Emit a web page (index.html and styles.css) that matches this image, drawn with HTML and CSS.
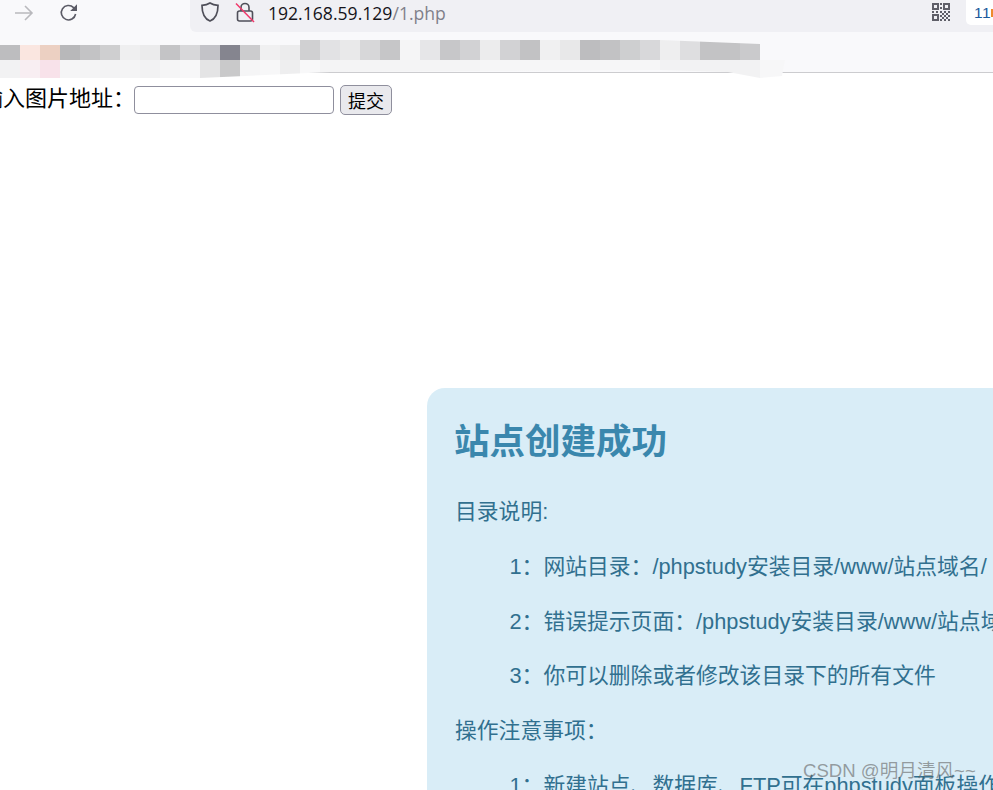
FILE: index.html
```html
<!DOCTYPE html>
<html lang="zh-CN">
<head>
    <meta charset="UTF-8">
    <title>192.168.59.129/1.php</title>
    <link rel="stylesheet" href="styles.css">
</head>
<body>
    <div class="toolbar">
        <div class="navButtons">
            <svg class="forward" width="20" height="18" viewBox="0 0 20 18"><path d="M1 9H18M11 2l7 7-7 7"/></svg>
            <svg class="reload" width="20" height="20" viewBox="0 0 20 20"><path d="M16.6 11a7.2 7.2 0 1 1-2-6.4L17 7"/><path class="fill" d="M18 1.2V8h-6.8z"/></svg>
        </div>
        <div class="urlBar">
            <svg class="shield" width="20" height="22" viewBox="0 0 20 22"><path d="M10 2c2.300 1.500 5 2.200 8 2.400C18 12 16 17.500 10 20 4 17.500 2 12 2 4.400 5 4.200 7.700 3.500 10 2z"/></svg>
            <svg class="lock" width="20" height="22" viewBox="0 0 20 22"><rect x="2.500" y="10" width="15" height="10" rx="2"/><path d="M6 10V6.500a4 4 0 0 1 8 0V10"/><path class="slash" d="M1 2.500L19 21"/></svg>
            <div class="address">192.168.59.129<span class="addressPath">/1.php</span></div>
            <svg class="qrIcon" width="18" height="18" viewBox="0 0 18 18">
                <path d="M0 0h7v7H0zM2 2v3h3V2zM11 0h7v7h-7zM13 2v3h3V2zM0 11h7v7H0zM2 13v3h3v-3z" fill-rule="evenodd"/>
                <path d="M8 0h2v2H8zM8 4h2v2H8zM0 8h2v2H0zM4 8h2v2H4zM8 8h2v2H8zM12 8h2v2h-2zM16 8h2v2h-2zM10 10h2v2h-2zM14 10h2v2h-2zM8 12h2v2H8zM12 12h2v2h-2zM16 12h2v2h-2zM10 14h2v2h-2zM14 14h2v2h-2zM8 16h2v2H8zM12 16h2v2h-2zM16 16h2v2h-2z"/>
            </svg>
            <div class="extTab"><span class="extNum">11</span><span class="extMark"></span></div>
        </div>
    </div>
    <div class="bookmarks">
        <div class="mosaicTop"></div>
        <div class="mosaicBottom"></div>
    </div>

    <form class="imgForm">
        <label class="imgLabel">输入图片地址：</label>
        <input class="imgInput" type="text">
        <button class="imgSubmit" type="button">提交</button>
    </form>

    <div class="sitePanel">
        <h1>站点创建成功</h1>
        <p>目录说明:</p>
        <p class="item">1：网站目录：/phpstudy安装目录/www/站点域名/</p>
        <p class="item">2：错误提示页面：/phpstudy安装目录/www/站点域名/error/</p>
        <p class="item">3：你可以删除或者修改该目录下的所有文件</p>
        <p>操作注意事项：</p>
        <p class="item">1：新建站点、数据库、FTP可在phpstudy面板操作</p>
    </div>

    <div class="watermark">CSDN @明月清风~~</div>
</body>
</html>
```
FILE: styles.css
```css
html, body {
    margin: 0;
    padding: 0;
    height: 790px;
    overflow: hidden;
    background: #fff;
}
body {
    position: relative;
    font-family: "Liberation Sans", "Noto Sans CJK SC", sans-serif;
}

/* browser chrome */
.toolbar {
    display: flex;
    height: 32px;
    background: #f9f9fb;
}
.navButtons {
    display: flex;
    align-items: flex-start;
    width: 191px;
    padding: 4px 0 0 14px;
    box-sizing: border-box;
}
.navButtons svg {
    fill: none;
    stroke-width: 1.6;
}
.forward {
    stroke: #b9b9bd;
}
.reload {
    margin-left: 25px;
    margin-top: -1px;
    stroke: #5b5b66;
}
.reload .fill {
    fill: #5b5b66;
    stroke: none;
}
.urlBar {
    flex: 1;
    display: flex;
    align-items: flex-start;
    background: #f0f0f4;
    border-bottom-left-radius: 6px;
}
.shield {
    margin: 1px 0 0 10px;
    fill: none;
    stroke: #4f4f59;
    stroke-width: 1.7;
}
.lock {
    margin: 1px 0 0 15px;
    fill: none;
    stroke: #4f4f59;
    stroke-width: 1.6;
}
.lock .slash {
    stroke: #f0386b;
    stroke-width: 1.5;
}
.address {
    margin-left: 13px;
    font-family: "Open Sans", "Noto Sans", sans-serif;
    font-size: 17.600px;
    line-height: 26px;
    color: #15141a;
    width: 664px;
    white-space: nowrap;
}
.addressPath {
    color: #80808a;
}
.qrIcon {
    margin-top: 3px;
    fill: #5f5f68;
}
.extTab {
    display: flex;
    align-items: center;
    margin-left: 16px;
    padding-left: 8px;
    flex: 1;
    height: 25px;
    background: #fff;
    border-bottom-left-radius: 5px;
    overflow: hidden;
}
.extNum {
    font-size: 15.500px;
    color: #1b5a9c;
    letter-spacing: 0.500px;
}
.extMark {
    width: 2px;
    height: 8px;
    background: #ee8a2c;
}

.bookmarks {
    position: relative;
    height: 40px;
    background: #f9f9fb;
    border-bottom: 1px solid #cccccf;
}
.mosaicTop {
    position: absolute;
    left: 0;
    top: 8px;
    width: 760px;
    height: 20px;
    clip-path: polygon(0 5px, 300px 5px, 300px 0, 660px 0, 760px 4px, 760px 20px, 0 20px);
    background: linear-gradient(90deg,
        #bdbdbf 0 20px, #fae6e0 0 40px, #ecd0c2 0 60px, #b8b8ba 0 80px, #c3c3c5 0 100px,
        #cfcfd0 0 120px, #efeff0 0 140px, #ebebec 0 160px, #c4c4c6 0 180px, #d8d8da 0 200px,
        #c3c3c8 0 220px, #85858f 0 240px, #ccccce 0 260px, #f0f0f1 0 280px, #ececed 0 300px,
        #d0d0d2 0 320px, #e2e2e4 0 340px, #e9e9ea 0 360px, #d7d7d9 0 380px, #c6c6c8 0 400px,
        #f5f5f6 0 420px, #e6e6e8 0 440px, #c7c7c9 0 460px, #d2d2d4 0 480px, #ececed 0 500px,
        #d2d2d4 0 520px, #c2c2c4 0 540px, #f0f0f1 0 560px, #e8e8e9 0 580px, #bdbdbf 0 600px,
        #c2c2c4 0 620px, #cecfd0 0 640px, #d8d8da 0 660px, #eeeeef 0 680px, #dedee0 0 700px,
        #c3c3c5 0 720px, #c3c3c5 0 740px, #cacacc 0 760px);
}
.mosaicBottom {
    position: absolute;
    left: 0;
    top: 28px;
    width: 785px;
    height: 18px;
    clip-path: polygon(0 0, 785px 0, 782px 16px, 760px 18px, 728px 12px, 660px 10px, 330px 12px, 200px 18px, 0 18px);
    background: linear-gradient(90deg,
        #f2f2f3 0 20px, #f8eef2 0 40px, #f8e2ea 0 60px, #f5f5f6 0 80px, #f4f4f5 0 100px,
        #f3f3f4 0 120px, #f4f4f5 0 140px, #f2f2f3 0 160px, #f5f5f6 0 180px, #f7f7f8 0 200px,
        #e4e4e5 0 220px, #c9c9ca 0 240px, #f5f5f6 0 260px, #f7f7f8 0 280px, #eeeeef 0 300px,
        #f8f8f9 0 320px, #f4f4f5 0 480px, #f6f6f7 0 660px, #f2f2f3 0 760px, #f7f7f8 0 785px);
}

/* page */
.imgForm {
    display: flex;
    align-items: center;
    margin: 12px 0 0 -19px;
    height: 30px;
}
.imgLabel {
    font-size: 22px;
    line-height: 26px;
    padding-bottom: 2px;
    color: #000;
    width: 153px;
    white-space: nowrap;
}
.imgInput {
    width: 200px;
    height: 28px;
    box-sizing: border-box;
    border: 1px solid #8f8f9d;
    border-radius: 4px;
    background: #fff;
    padding: 0;
}
.imgSubmit {
    margin-left: 6px;
    width: 52px;
    height: 30px;
    box-sizing: border-box;
    border: 1px solid #8f8f9d;
    border-radius: 5px;
    background: #e9e9ed;
    padding: 0;
    font-family: "Noto Sans CJK SC", sans-serif;
    font-size: 18px;
    color: #000;
}

.sitePanel {
    width: 900px;
    margin: 273px 0 0 427px;
    padding: 33px 28px;
    box-sizing: border-box;
    background: #d9edf7;
    border-radius: 18px;
    color: #31708f;
    font-size: 21.800px;
}
.sitePanel h1 {
    margin: 1px 0 37px -1px;
    font-size: 35.500px;
    line-height: 40px;
    color: #3a87ad;
}
.sitePanel p {
    margin: 0 0 29.800px;
    line-height: 25px;
    white-space: nowrap;
}
.sitePanel .item {
    padding-left: 54.500px;
}
.watermark {
    position: absolute;
    left: 803px;
    top: 759px;
    font-size: 18.600px;
    line-height: 24px;
    color: rgba(100, 100, 100, 0.6);
    white-space: nowrap;
}
```
